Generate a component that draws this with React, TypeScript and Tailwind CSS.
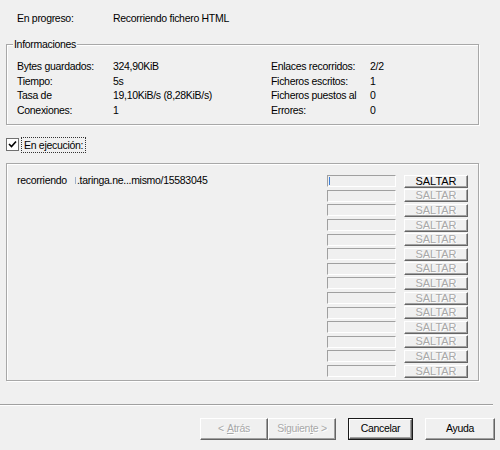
import type { ReactNode } from 'react';

// Raised 3D button, classic dialog look
function Btn({
  children,
  w,
  h,
  disabled,
  isDefault,
}: {
  children: ReactNode;
  w: string;
  h: string;
  disabled?: boolean;
  isDefault?: boolean;
}) {
  return (
    <div
      className={`${w} ${h} flex items-center justify-center box-border ${
        isDefault ? 'border border-[#1a1a1a]' : ''
      }`}
    >
      <div
        className={`w-full h-full flex items-center justify-center border-t border-l border-t-white border-l-white border-r border-b border-r-[#646464] border-b-[#646464] shadow-[inset_-1px_-1px_0_#a0a0a0] ${
          disabled ? 'text-[#a8a8a8] [text-shadow:1px_1px_0_#ffffff]' : 'text-black'
        }`}
      >
        {children}
      </div>
    </div>
  );
}

const infoRows = [
  ['Bytes guardados:', '324,90KiB', 'Enlaces recorridos:', '2/2'],
  ['Tiempo:', '5s', 'Ficheros escritos:', '1'],
  ['Tasa de', '19,10KiB/s (8,28KiB/s)', 'Ficheros puestos al', '0'],
  ['Conexiones:', '1', 'Errores:', '0'],
];

const slots = Array.from({ length: 14 }, (_, i) => i);

export default function App() {
  return (
    <div className="w-[500px] h-[450px] bg-[#f0f0f0] text-[10.5px] tracking-[-0.3px] text-black overflow-hidden font-['Liberation_Sans',Arial,sans-serif]">
      {/* status line */}
      <div className="flex pl-[17px] pt-[11px] h-[44px]">
        <span className="w-[96px]">En progreso:</span>
        <span>Recorriendo fichero HTML</span>
      </div>

      {/* Informaciones group */}
      <div className="relative ml-[6px] w-[473px] h-[81px] border border-[#a8a8a8] shadow-[1px_1px_0_#ffffff,inset_1px_1px_0_#ffffff]">
        <span className="absolute -top-[8px] left-[6px] bg-[#f0f0f0] px-[1px] leading-[14px]">Informaciones</span>
        <div className="pt-[14px] pl-[10px]">
          {infoRows.map(([a, b, c, d]) => (
            <div key={a} className="flex h-[14.5px] leading-[14.5px]">
              <span className="w-[96px]">{a}</span>
              <span className="w-[158px]">{b}</span>
              <span className="w-[99px]">{c}</span>
              <span>{d}</span>
            </div>
          ))}
        </div>
      </div>

      {/* checkbox */}
      <div className="flex items-center h-[38px] pl-[6px] pt-[1px]">
        <div className="w-[13px] h-[13px] border border-[#707070] bg-white flex items-center justify-center">
          <svg width="9" height="9" viewBox="0 0 9 9">
            <path d="M1 4 L3.5 6.5 L8 1.5" stroke="#000" strokeWidth="1.6" fill="none" />
          </svg>
        </div>
        <span className="ml-[2px] px-[2px] leading-[14px] border border-dotted border-[#333]">En ejecución:</span>
      </div>

      {/* running panel */}
      <div className="ml-[6px] w-[473px] h-[218px] border border-[#a8a8a8] shadow-[1px_1px_0_#ffffff,inset_1px_1px_0_#ffffff] flex pt-[9px]">
        <div className="flex w-[320px] pl-[10px] h-[14.5px] leading-[14.5px]">
          <span className="w-[58px]">recorriendo</span>
          <span className="flex items-center">
            <span className="inline-block w-[1px] h-[7px] bg-[#9fb0c8] mr-[1px]" />
            .taringa.ne...mismo/15583045
          </span>
        </div>
        <div className="flex flex-col mt-[1px]">
          {slots.map((i) => (
            <div key={i} className="flex items-center h-[14.6px]">
              <div className="w-[69px] h-[12px] border-t border-l border-t-[#a0a0a0] border-l-[#a0a0a0] border-r border-b border-r-white border-b-white flex items-center pl-[1px]">
                {i === 0 && <span className="w-[1px] h-[8px] bg-[#3c7fd8]" />}
              </div>
              <div className="ml-[8px]">
                <Btn w="w-[64px]" h="h-[13px]" disabled={i !== 0}>
                  <span className="text-[11px] tracking-normal leading-none">SALTAR</span>
                </Btn>
              </div>
            </div>
          ))}
        </div>
      </div>

      {/* separator */}
      <div className="mt-[23px] w-[493px] h-[2px] border-t border-t-[#a0a0a0] border-b border-b-white" />

      {/* dialog buttons */}
      <div className="flex pl-[200px] pt-[12px]">
        <Btn w="w-[68px]" h="h-[22px]" disabled>
          &lt; <span className="underline ml-[3px]">A</span>trás
        </Btn>
        <Btn w="w-[68px]" h="h-[22px]" disabled>
          Siguien<span className="underline">t</span>e &gt;
        </Btn>
        <div className="ml-[12px]">
          <Btn w="w-[65px]" h="h-[22px]" isDefault>
            Cancelar
          </Btn>
        </div>
        <div className="ml-[12px]">
          <Btn w="w-[70px]" h="h-[22px]">
            Ayuda
          </Btn>
        </div>
      </div>
    </div>
  );
}
